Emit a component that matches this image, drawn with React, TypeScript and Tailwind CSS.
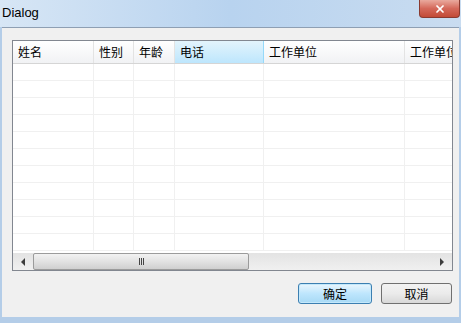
import { X } from "lucide-react";

const columns = [
  { label: "姓名", width: "w-[81px]" },
  { label: "性别", width: "w-[40px]" },
  { label: "年龄", width: "w-[41px]" },
  { label: "电话", width: "w-[89px]", active: true },
  { label: "工作单位", width: "w-[141px]" },
  { label: "工作单位", width: "w-[60px]" },
];

const rows = Array.from({ length: 11 }, (_, i) => i);

function ScrollBar() {
  return (
    <div className="flex h-[17px] shrink-0 bg-gradient-to-b from-[#e3e3e3] to-[#f0f0f0]">
      <div className="flex w-[20px] items-center justify-center">
        <span className="h-0 w-0 border-y-[4px] border-r-[4px] border-y-transparent border-r-[#3c3c3c]" />
      </div>
      <div className="flex w-[216px] items-center justify-center rounded-[2px] border border-[#9b9b9b] bg-gradient-to-b from-[#f2f2f2] via-[#e2e2e2] to-[#cfcfcf]">
        <div className="flex gap-[1px]">
          <span className="h-[7px] w-[1px] bg-[#444]" />
          <span className="h-[7px] w-[1px] bg-[#444]" />
          <span className="h-[7px] w-[1px] bg-[#444]" />
        </div>
      </div>
      <div className="flex-1" />
      <div className="flex w-[20px] items-center justify-center">
        <span className="h-0 w-0 border-y-[4px] border-l-[4px] border-y-transparent border-l-[#3c3c3c]" />
      </div>
    </div>
  );
}

export default function App() {
  return (
    <div className="flex h-[323px] w-[461px] flex-col overflow-hidden bg-[#b4cde8] font-['Noto_Sans_CJK_SC',sans-serif] text-[12px] text-black">
      {/* Title bar */}
      <div className="flex h-[27px] shrink-0 items-start justify-between bg-gradient-to-r from-[#d7e6f5] via-[#b8d3ef] to-[#c9dcf0]">
        <span className="pl-[2px] pt-[4px] font-['Liberation_Sans',sans-serif] text-[13px] leading-[18px] text-black">
          Dialog
        </span>
        <div className="mr-[1px] flex h-[18px] w-[41px] items-center justify-center rounded-b-[4px] border border-t-0 border-[#8a3a30] bg-gradient-to-b from-[#e9a99e] via-[#d4685a] to-[#c24a36]">
          <X className="h-[12px] w-[12px] text-white" strokeWidth={3.5} />
        </div>
      </div>

      {/* Client area */}
      <div className="mx-[2px] mb-[6px] flex flex-1 flex-col border-t border-[#8e9fb3] bg-[#f0f0f0] pl-[10px] pr-[4px] pt-[12px]">
        <div className="flex h-[231px] w-[441px] flex-col overflow-hidden border border-[#828790] bg-white">
          {/* Header */}
          <div className="flex h-[23px] shrink-0 border-b border-[#d5d5d5]">
            {columns.map((c, i) => (
              <div
                key={i}
                className={`${c.width} flex shrink-0 items-center whitespace-nowrap border-r pl-[5px] ${
                  c.active
                    ? "border-[#96d9f9] bg-gradient-to-b from-[#e3f4fc] to-[#bde6fd]"
                    : "border-[#e3e3e3] bg-gradient-to-b from-white to-[#f1f2f4]"
                }`}
              >
                {c.label}
              </div>
            ))}
          </div>

          {/* Body */}
          <div className="flex-1 overflow-hidden">
            {rows.map((r) => (
              <div key={r} className="flex h-[17px] border-b border-[#f0f0f0]">
                {columns.map((c, i) => (
                  <div key={i} className={`${c.width} shrink-0 border-r border-[#f0f0f0]`} />
                ))}
              </div>
            ))}
          </div>

          <ScrollBar />
        </div>

        {/* Buttons */}
        <div className="mt-[12px] flex justify-end gap-[9px] pr-[3px]">
          <button className="flex h-[21px] w-[74px] items-center justify-center rounded-[3px] border border-[#3c7fb1] bg-gradient-to-b from-[#eaf6fd] via-[#bee6fd] to-[#a7d9f5] shadow-[inset_0_0_0_1px_#c4e8fb]">
            确定
          </button>
          <button className="flex h-[21px] w-[71px] items-center justify-center rounded-[3px] border border-[#707070] bg-gradient-to-b from-[#f2f2f2] via-[#ebebeb] to-[#d8d8d8]">
            取消
          </button>
        </div>
      </div>
    </div>
  );
}
